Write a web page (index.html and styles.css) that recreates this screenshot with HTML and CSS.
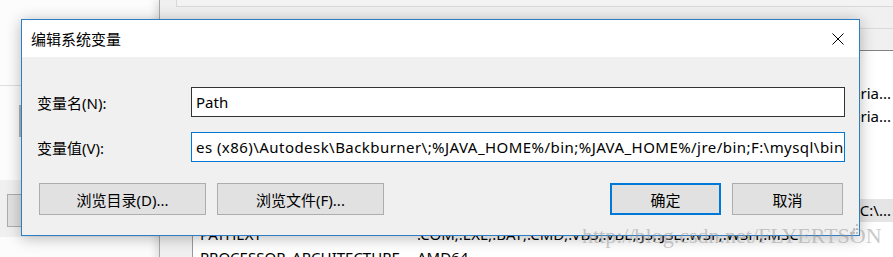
FILE: index.html
```html
<!DOCTYPE html>
<html lang="zh-CN">
<head>
    <meta charset="UTF-8">
    <meta name="viewport" content="width=device-width, initial-scale=1.0">
    <title>编辑系统变量</title>
    <link rel="stylesheet" href="styles.css">
</head>
<body>

<div class="desktop">

    <!-- window far behind: system properties -->
    <div class="win-props">
        <div class="props-tab">
            <div class="props-sep"></div>
            <div class="props-thumb"></div>
        </div>
        <div class="props-foot">
            <div class="props-btn"></div>
        </div>
    </div>

    <!-- environment variables window -->
    <div class="win-env">
        <div class="user-frame"></div>
        <div class="env-rule"></div>
        <div class="sys-list">
            <div class="list-head"></div>
            <div class="row"><span class="name">MAYA_PLUG_IN_PATH</span><span class="val val-end">C:\Program Files\Common Files\Autodesk Shared\Materia...</span></div>
            <div class="row"><span class="name">MAYA_SCRIPT_PATH</span><span class="val val-end">C:\Program Files\Common Files\Autodesk Shared\Materia...</span></div>
            <div class="row"><span class="name">MOZ_PLUGIN_PATH</span><span class="val">C:\Program Files (x86)\Foxit Software\plugins\</span></div>
            <div class="row"><span class="name">NUMBER_OF_PROCESSORS</span><span class="val">4</span></div>
            <div class="row"><span class="name">OS</span><span class="val">Windows_NT</span></div>
            <div class="row selected"><span class="name">Path</span><span class="val val-end">C:\ProgramData\Oracle\Java\javapath;C:\...</span></div>
            <div class="row"><span class="name">PATHEXT</span><span class="val">.COM;.EXE;.BAT;.CMD;.VBS;.VBE;.JS;.JSE;.WSF;.WSH;.MSC</span></div>
            <div class="row"><span class="name">PROCESSOR_ARCHITECTURE</span><span class="val">AMD64</span></div>
        </div>
    </div>

    <!-- the dialog itself -->
    <div class="dialog">
        <div class="titlebar">
            <span class="title">编辑系统变量</span>
            <span class="close">
                <svg width="12" height="12" viewBox="0 0 12 12">
                    <path d="M0.5 0.5L11.5 11.5M11.5 0.5L0.5 11.5" stroke="#000" stroke-width="1" fill="none"/>
                </svg>
            </span>
        </div>
        <div class="dlg-body">
            <div class="field">
                <label class="field-label" for="varName">变量名(N):</label>
                <input class="textbox" id="varName" type="text" value="Path">
            </div>
            <div class="field">
                <label class="field-label" for="varValue">变量值(V):</label>
                <input class="textbox focused" id="varValue" type="text" value="es (x86)\Autodesk\Backburner\;%JAVA_HOME%/bin;%JAVA_HOME%/jre/bin;F:\mysql\bin">
            </div>
            <div class="actions">
                <div class="btn-group">
                    <button type="button" class="btn btn-wide">浏览目录(D)...</button>
                    <button type="button" class="btn btn-wide">浏览文件(F)...</button>
                </div>
                <div class="btn-group">
                    <button type="button" class="btn btn-default">确定</button>
                    <button type="button" class="btn">取消</button>
                </div>
            </div>
        </div>
        <svg class="grip" width="10" height="12" viewBox="0 0 10 12">
            <rect x="7" y="1" width="2" height="2" fill="#c2c2c2"/>
            <rect x="4" y="5" width="2" height="2" fill="#c2c2c2"/>
            <rect x="7" y="5" width="2" height="2" fill="#c2c2c2"/>
            <rect x="1" y="9" width="2" height="2" fill="#c2c2c2"/>
            <rect x="4" y="9" width="2" height="2" fill="#c2c2c2"/>
            <rect x="7" y="9" width="2" height="2" fill="#c2c2c2"/>
        </svg>
    </div>

    <div class="watermark">http://blog.csdn.net/FLYERTSON</div>
</div>

</body>
</html>
```

FILE: styles.css
```css
* {
    box-sizing: border-box;
}
body {
    margin: 0;
    width: 893px;
    height: 257px;
    overflow: hidden;
    background: #fff;
    font-family: "Noto Sans", "Noto Sans CJK SC", sans-serif;
    font-size: 15px;
    color: #000;
}
.desktop {
    position: relative;
    width: 893px;
    height: 257px;
    overflow: hidden;
}

/* back window on the left */
.win-props {
    position: absolute;
    left: 0;
    top: 0;
    width: 160px;
    height: 257px;
    display: flex;
    flex-direction: column;
    background: #fcfcfc;
}
.props-tab {
    height: 180px;
    padding-top: 85px;
}
.props-sep {
    height: 1px;
    background: #dedede;
}
.props-thumb {
    width: 2px;
    height: 32px;
    margin: 19px 0 0 19px;
    background: #b4b4b4;
}
.props-foot {
    height: 57px;
    padding: 14px 0 0 7px;
    background: #f0f0f0;
}
.props-btn {
    width: 40px;
    height: 33px;
    background: #e1e1e1;
    border: 1px solid #adadad;
}

/* environment variables window */
.win-env {
    position: absolute;
    left: 159px;
    top: 0;
    width: 760px;
    height: 300px;
    background: #f0f0f0;
    border-left: 1px solid #a8a8a8;
    box-shadow: -3px 0 8px rgba(0, 0, 0, 0.12);
}
.user-frame {
    height: 7px;
    margin-left: 16px;
    border-left: 1px solid #d9d9d9;
    border-bottom: 1px solid #d9d9d9;
    background: #f3f3f3;
}
.env-rule {
    height: 1px;
    margin-top: 21px;
    background: #dadada;
}
.sys-list {
    margin: 21px 0 0 32px;
    background: #fff;
    border-top: 1px solid #828282;
    border-left: 1px solid #9a9a9a;
    height: 300px;
}
.list-head {
    height: 30px;
}
.row {
    display: flex;
    height: 23.5px;
    align-items: center;
    white-space: nowrap;
}
.row.selected {
    background: #e5e5e5;
}
.name {
    width: 224px;
    padding-left: 7px;
    overflow: hidden;
}
.val {
    width: 474px;
    overflow: hidden;
}
.val-end {
    display: flex;
    justify-content: flex-end;
}

/* dialog */
.dialog {
    position: absolute;
    left: 21px;
    top: 19px;
    width: 839px;
    height: 217px;
    background: #f0f0f0;
    border: 1px solid #2f7dc4;
    box-shadow: 0 2px 14px rgba(0, 0, 0, 0.28);
    z-index: 2;
}
.titlebar {
    display: flex;
    align-items: center;
    height: 37px;
    background: #fff;
}
.title {
    flex: 1;
    padding-left: 9px;
}
.close {
    width: 42px;
    height: 37px;
    display: flex;
    align-items: center;
    justify-content: center;
}
.close svg {
    display: block;
}
.dlg-body {
    padding: 30px 14px 20px 15px;
}
.field {
    display: flex;
    align-items: center;
    height: 30px;
    margin-bottom: 15px;
}
.field-label {
    width: 154px;
}
.textbox {
    flex: 1;
    height: 30px;
    margin: 0;
    padding: 0 1px 0 4px;
    border: 1px solid #333;
    background: #fff;
    font-family: inherit;
    font-size: 15px;
    color: #000;
    outline: none;
}
.textbox.focused {
    border-color: #0078d7;
    letter-spacing: 0.45px;
}
.actions {
    display: flex;
    justify-content: space-between;
    margin-top: 21px;
    padding: 0 2px;
}
.btn-group {
    display: flex;
    gap: 11px;
}
.btn {
    width: 111px;
    height: 32px;
    padding: 0;
    background: #e1e1e1;
    border: 1px solid #adadad;
    font-family: inherit;
    font-size: 15px;
    color: #000;
}
.btn-wide {
    width: 167px;
}
.btn-default {
    border: 2px solid #0078d7;
}
.grip {
    position: absolute;
    right: 0;
    bottom: 0;
}

.watermark {
    position: absolute;
    left: 582px;
    top: 223px;
    font-family: "Liberation Serif", serif;
    font-size: 22px;
    color: rgba(150, 150, 150, 0.5);
    z-index: 3;
    pointer-events: none;
}
```
